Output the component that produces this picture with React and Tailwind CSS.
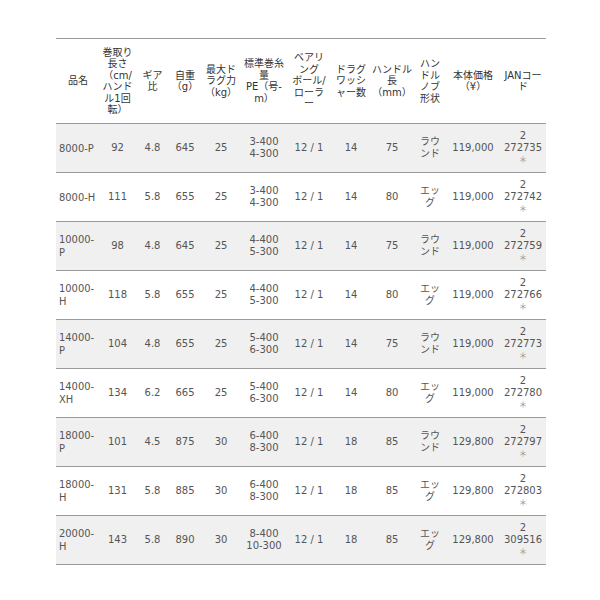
import React from "react";

const cols = "grid grid-cols-[44px_35px_35px_30px_42px_44px_46px_38px_44px_32px_54px_46px]";

const headers = [
  "品名",
  "巻取り\n長さ\n（cm/\nハンド\nル1回\n転）",
  "ギア\n比",
  "自重\n（g）",
  "最大ド\nラグ力\n（kg）",
  "標準巻糸\n量\nPE（号-\nm）",
  "ベアリ\nング\nボール/\nローラ\nー",
  "ドラグ\nワッシ\nャー数",
  "ハンドル\n長\n（mm）",
  "ハン\nドル\nノブ\n形状",
  "本体価格\n（¥）",
  "JANコー\nド",
];

const rows = [
  ["8000-P", "92", "4.8", "645", "25", "3-400\n4-300", "14", "75", "ラウ\nンド", "119,000", "272735"],
  ["8000-H", "111", "5.8", "655", "25", "3-400\n4-300", "14", "80", "エッ\nグ", "119,000", "272742"],
  ["10000-\nP", "98", "4.8", "645", "25", "4-400\n5-300", "14", "75", "ラウ\nンド", "119,000", "272759"],
  ["10000-\nH", "118", "5.8", "655", "25", "4-400\n5-300", "14", "80", "エッ\nグ", "119,000", "272766"],
  ["14000-\nP", "104", "4.8", "655", "25", "5-400\n6-300", "14", "75", "ラウ\nンド", "119,000", "272773"],
  ["14000-\nXH", "134", "6.2", "665", "25", "5-400\n6-300", "14", "80", "エッ\nグ", "119,000", "272780"],
  ["18000-\nP", "101", "4.5", "875", "30", "6-400\n8-300", "18", "85", "ラウ\nンド", "129,800", "272797"],
  ["18000-\nH", "131", "5.8", "885", "30", "6-400\n8-300", "18", "85", "エッ\nグ", "129,800", "272803"],
  ["20000-\nH", "143", "5.8", "890", "30", "8-400\n10-300", "18", "85", "エッ\nグ", "129,800", "309516"],
];

const Cell = ({ children }) => (
  <div className="flex items-center justify-center text-center whitespace-pre-line">
    {children}
  </div>
);

export default function App() {
  return (
    <div className="min-h-[600px] bg-white pt-[38px] pl-[56px] font-['DejaVu_Sans','Noto_Sans_CJK_JP',sans-serif] text-[10px] leading-[12px] text-[#555]">
      <div className="w-[490px] border-t border-[#9a9a9a]">
        {/* header */}
        <div className={`${cols} h-[85px] border-b border-[#9a9a9a] text-[#333] leading-[11.5px]`}>
          {headers.map((h, i) => (
            <Cell key={i}>{h}</Cell>
          ))}
        </div>

        {rows.map((r, i) => (
          <div
            key={r[0]}
            className={`${cols} h-[49px] border-b border-[#9a9a9a] ${i % 2 === 0 ? "bg-[#f0f0f0]" : "bg-white"}`}
          >
            <div className="flex items-center pl-[3px] whitespace-pre-line font-['DejaVu_Sans_Condensed','DejaVu_Sans',sans-serif] text-[11px] leading-[13px] text-[#555]">
              {r[0]}
            </div>
            <Cell>{r[1]}</Cell>
            <Cell>{r[2]}</Cell>
            <Cell>{r[3]}</Cell>
            <Cell>{r[4]}</Cell>
            <Cell>{r[5]}</Cell>
            <Cell>12 / 1</Cell>
            <Cell>{r[6]}</Cell>
            <Cell>{r[7]}</Cell>
            <Cell>{r[8]}</Cell>
            <Cell>{r[9]}</Cell>
            <div className="flex flex-col items-center justify-center text-center">
              <span>2</span>
              <span>{r[10]}</span>
              <span className="font-['Noto_Sans_CJK_JP',sans-serif] text-[#999] text-[9px] leading-[12px]">＊</span>
            </div>
          </div>
        ))}
      </div>
    </div>
  );
}
